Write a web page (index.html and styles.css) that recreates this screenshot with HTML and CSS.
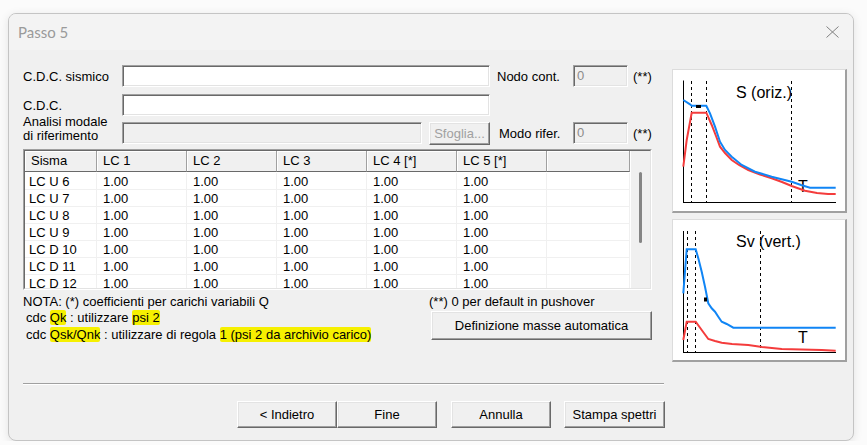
FILE: index.html
```html
<!DOCTYPE html>
<html>
<head>
<meta charset="utf-8">
<link rel="stylesheet" href="styles.css">
</head>
<body>
<div class="window">
  <div class="titlebar">
    <span class="title">Passo 5</span>
    <svg class="close" width="13" height="12" viewBox="0 0 13 12"><path d="M0.5 0.5 L12.5 11.5 M12.5 0.5 L0.5 11.5" stroke="#808080" stroke-width="1" fill="none"/></svg>
  </div>
  <div class="content">
    <div class="main">
      <div class="left">
        <div class="frow row1">
          <span class="lbl">C.D.C. sismico</span>
          <div class="field wide"></div>
          <span class="side nodo">Nodo cont.</span>
          <div class="field small dis">0</div>
          <span class="ast">(**)</span>
        </div>
        <div class="frow row2">
          <span class="lbl">C.D.C.</span>
          <div class="field wide"></div>
        </div>
        <div class="frow row3">
          <span class="lbl two">Analisi modale<br>di riferimento</span>
          <div class="field mid dis"></div>
          <button class="btn sfoglia" disabled>Sfoglia...</button>
          <span class="side modo">Modo rifer.</span>
          <div class="field small dis">0</div>
          <span class="ast">(**)</span>
        </div>
        <div class="tablebox">
          <div class="tableinner">
            <div class="tbl">
              <div class="thead">
                <div class="th">Sisma</div><div class="th">LC 1</div><div class="th">LC 2</div><div class="th">LC 3</div><div class="th">LC 4 [*]</div><div class="th">LC 5 [*]</div><div class="th"></div>
              </div>
              <div class="tbody">
                <div class="tr"><div class="td first">LC U 6</div><div class="td">1.00</div><div class="td">1.00</div><div class="td">1.00</div><div class="td">1.00</div><div class="td">1.00</div><div class="td"></div></div>
                <div class="tr"><div class="td first">LC U 7</div><div class="td">1.00</div><div class="td">1.00</div><div class="td">1.00</div><div class="td">1.00</div><div class="td">1.00</div><div class="td"></div></div>
                <div class="tr"><div class="td first">LC U 8</div><div class="td">1.00</div><div class="td">1.00</div><div class="td">1.00</div><div class="td">1.00</div><div class="td">1.00</div><div class="td"></div></div>
                <div class="tr"><div class="td first">LC U 9</div><div class="td">1.00</div><div class="td">1.00</div><div class="td">1.00</div><div class="td">1.00</div><div class="td">1.00</div><div class="td"></div></div>
                <div class="tr"><div class="td first">LC D 10</div><div class="td">1.00</div><div class="td">1.00</div><div class="td">1.00</div><div class="td">1.00</div><div class="td">1.00</div><div class="td"></div></div>
                <div class="tr"><div class="td first">LC D 11</div><div class="td">1.00</div><div class="td">1.00</div><div class="td">1.00</div><div class="td">1.00</div><div class="td">1.00</div><div class="td"></div></div>
                <div class="tr"><div class="td first">LC D 12</div><div class="td">1.00</div><div class="td">1.00</div><div class="td">1.00</div><div class="td">1.00</div><div class="td">1.00</div><div class="td"></div></div>
              </div>
            </div>
            <div class="vscroll"><div class="thumb"></div></div>
          </div>
        </div>
        <div class="notes">
          <div class="nleft">
            <div>NOTA: (*) coefficienti per carichi variabili Q</div>
            <div class="ind">cdc <span class="hl">Qk</span> : utilizzare <span class="hl">psi 2</span></div>
            <div class="ind">cdc <span class="hl">Qsk/Qnk</span> : utilizzare di regola <span class="hl">1 (psi 2 da archivio carico)</span></div>
          </div>
          <div class="nright">
            <div>(**) 0 per default in pushover</div>
            <button class="btn defmasse">Definizione masse automatica</button>
          </div>
        </div>
      </div>
      <div class="right">
        <div class="graph g1">
          <svg width="172" height="141" viewBox="1 1 172 141">
            <line x1="11.5" y1="11.5" x2="11.5" y2="134" stroke="#000" stroke-width="1"/>
            <line x1="11" y1="133.5" x2="164" y2="133.5" stroke="#000" stroke-width="1"/>
            <line x1="19.5" y1="12" x2="19.5" y2="133" stroke="#000" stroke-width="1" stroke-dasharray="3 3"/>
            <line x1="34.5" y1="12" x2="34.5" y2="133" stroke="#000" stroke-width="1" stroke-dasharray="3 3"/>
            <line x1="119.5" y1="12" x2="119.5" y2="133" stroke="#000" stroke-width="1" stroke-dasharray="3 3"/>
            <text x="64" y="28.5" class="gtxt">S (oriz.)</text>
            <text x="126" y="123" class="gtxt">T</text>
            <polyline fill="none" stroke="#f43c3c" stroke-width="2" points="11.3,97.7 14.7,71 19.7,43.7 34.3,43.7 39.7,56 44,67 48,77.7 53,84 59.7,91 67,96 76.3,101 88,105.5 99.7,109.3 110,113 119.7,117 133,121.7 145,124 156,125 163.7,125"/>
            <polyline fill="none" stroke="#1085f5" stroke-width="2" points="11.3,31 18,35.3 19.7,36.7 34.3,36.7 38,44.3 43,57.7 48,72.7 53,81 59.7,87.7 69.7,96 83,102.7 99.7,107.7 119.7,112.7 129,116 138,118.7 163.7,118.7"/>
            <rect x="24" y="36" width="5" height="3" fill="#000"/>
          </svg>
        </div>
        <div class="graph g2">
          <svg width="172" height="140" viewBox="1 1 172 140">
            <line x1="11.5" y1="12" x2="11.5" y2="134" stroke="#000" stroke-width="1"/>
            <line x1="11" y1="133.5" x2="164" y2="133.5" stroke="#000" stroke-width="1"/>
            <line x1="15.5" y1="12" x2="15.5" y2="133" stroke="#000" stroke-width="1" stroke-dasharray="3 3"/>
            <line x1="23.5" y1="12" x2="23.5" y2="133" stroke="#000" stroke-width="1" stroke-dasharray="3 3"/>
            <line x1="88.5" y1="12" x2="88.5" y2="133" stroke="#000" stroke-width="1" stroke-dasharray="3 3"/>
            <text x="64" y="27.7" class="gtxt">Sv (vert.)</text>
            <text x="126" y="123.7" class="gtxt">T</text>
            <polyline fill="none" stroke="#f43c3c" stroke-width="2" points="11.3,121 14.7,102.7 23.7,102.7 29.7,111 36.3,120 43,122 49.7,123.7 60,125 76.3,126 90,128 109.7,130 149.7,131 163.7,131.7"/>
            <polyline fill="none" stroke="#1085f5" stroke-width="2" points="11.3,74.3 14.7,30.3 23.7,30.3 26.3,39.3 29.7,52.7 33,67.7 36.3,84.3 39.7,89.3 43,92.7 46.3,97.7 49.7,102.7 54.7,105 61.3,108.7 163.7,108.7"/>
            <rect x="32" y="78.5" width="3" height="4" fill="#000"/>
          </svg>
        </div>
      </div>
    </div>
    <div class="sep"></div>
    <div class="buttons">
      <button class="btn b-ind">&lt; Indietro</button>
      <button class="btn b-fine">Fine</button>
      <button class="btn b-ann">Annulla</button>
      <button class="btn b-stampa">Stampa spettri</button>
    </div>
  </div>
</div>
</body>
</html>
```
FILE: styles.css
```css
html, body {
  margin: 0;
  padding: 0;
  background: #fbfbfb;
}

.window {
  box-sizing: border-box;
  width: 846px;
  height: 428px;
  margin: 13px 0 0 8px;
  border: 1px solid #c4c4c4;
  border-radius: 8px;
  background: #f0f0f0;
  overflow: hidden;
  font: 13px "Liberation Sans", Arial, sans-serif;
  color: #000;
  box-shadow: 0 2px 10px rgba(0, 0, 0, 0.10);
}

.titlebar {
  height: 36px;
  background: #f3f3f3;
  display: flex;
  align-items: center;
  justify-content: space-between;
  padding: 0 14px 0 9px;
}

.title {
  font: 15px Lato, "Noto Sans", sans-serif;
  color: #9a9a9a;
}

.close {
  display: block;
}

.content {
  padding-left: 14px;
}

.main {
  display: flex;
  align-items: flex-start;
}

.left {
  width: 629px;
  padding-top: 15px;
}

.right {
  width: 175px;
  margin-left: 20px;
  padding-top: 19px;
  display: flex;
  flex-direction: column;
  gap: 6px;
}

/* form rows */
.frow {
  display: flex;
  align-items: center;
  height: 22px;
  white-space: nowrap;
}

.row1 { margin-bottom: 7px; }
.row2 { margin-bottom: 6px; }
.row3 { margin-bottom: 5px; }

.lbl {
  width: 99px;
  line-height: 15px;
}

.lbl.two {
  line-height: 14.5px;
  margin-top: -8px;
}

.field {
  box-sizing: border-box;
  height: 22px;
  background: #fff;
  border: 1px solid;
  border-color: #a0a0a0 #fff #fff #a0a0a0;
  box-shadow: inset 1px 1px 0 #696969, inset -1px -1px 0 #e3e3e3;
  padding-left: 3px;
  line-height: 20px;
}

.field.dis {
  background: #f0f0f0;
  color: #8c8c8c;
}

.field.wide { width: 368px; }
.field.mid { width: 300px; }
.field.small { width: 55px; }

.side { display: inline-block; }
.side.nodo { margin-left: 7px; width: 76px; }
.side.modo { margin-left: 9px; width: 74px; }

.ast { margin-left: 5px; }

.btn {
  box-sizing: border-box;
  font: 13px "Liberation Sans", Arial, sans-serif;
  color: #000;
  background: #f0f0f0;
  border: 1px solid;
  border-color: #fff #696969 #696969 #fff;
  box-shadow: inset -1px -1px 0 #a0a0a0, inset 1px 1px 0 #e3e3e3;
  padding: 0;
  margin: 0;
  border-radius: 0;
}

.btn.sfoglia {
  width: 61px;
  height: 23px;
  margin-left: 7px;
  color: #a0a0a0;
}

/* table */
.tablebox {
  box-sizing: border-box;
  height: 141px;
  border: 1px solid;
  border-color: #a0a0a0 #fff #fff #a0a0a0;
}

.tableinner {
  box-sizing: border-box;
  height: 139px;
  border: 1px solid;
  border-color: #696969 #e3e3e3 #e3e3e3 #696969;
  display: flex;
  overflow: hidden;
}

.tbl {
  width: 605px;
  background: #fff;
}

.thead, .tr {
  display: grid;
  grid-template-columns: 72px 90px 90px 90px 90px 90px 83px;
}

.th {
  box-sizing: border-box;
  height: 21px;
  line-height: 20px;
  padding-left: 6px;
  background: #f0f0f0;
  border-right: 1px solid #a0a0a0;
  border-bottom: 1px solid #696969;
  box-shadow: inset 1px 1px 0 #fff;
  white-space: nowrap;
}

.tbody {
  padding-top: 1px;
}

.td {
  box-sizing: border-box;
  height: 17px;
  line-height: 17px;
  padding-left: 6px;
  border-right: 1px solid #f0f0f0;
  border-bottom: 1px solid #f0f0f0;
  white-space: nowrap;
}

.td.first {
  padding-left: 4px;
}

.vscroll {
  width: 20px;
  background: #f0f0f0;
  border-left: 1px solid #fff;
  box-sizing: border-box;
  padding: 21px 0 0 8px;
}

.thumb {
  width: 3px;
  height: 71px;
  background: #858585;
  border-radius: 2px;
}

/* notes */
.notes {
  display: flex;
  padding-top: 3.5px;
  line-height: 16.5px;
  white-space: nowrap;
}

.nleft { width: 406px; }
.nright { width: 223px; }

.ind { padding-left: 3px; }

.hl {
  background: #f6f000;
  border-radius: 2px;
}

.btn.defmasse {
  display: block;
  width: 221px;
  height: 29px;
  margin: 1px 0 0 2px;
}

/* graphs */
.graph {
  box-sizing: border-box;
  width: 175px;
  background: #fff;
  border-style: solid;
  border-width: 1px 2px 2px 1px;
  border-color: #dcdcdc #a0a0a0 #a0a0a0 #dcdcdc;
}

.graph svg { display: block; }

.g1 { height: 144px; }
.g2 { height: 143px; }

.gtxt {
  font-family: "Liberation Sans", Arial, sans-serif;
  font-size: 16px;
  fill: #000;
}

/* bottom */
.sep {
  width: 641px;
  margin-top: 21px;
  border-top: 1px solid #a0a0a0;
  border-bottom: 1px solid #fff;
}

.buttons {
  display: flex;
  margin-top: 16px;
  padding-left: 214px;
}

.buttons .btn { height: 27px; }
.b-ind { width: 100px; }
.b-fine { width: 100px; }
.b-ann { width: 100px; margin-left: 14px; }
.b-stampa { width: 101px; margin-left: 13px; }
```
